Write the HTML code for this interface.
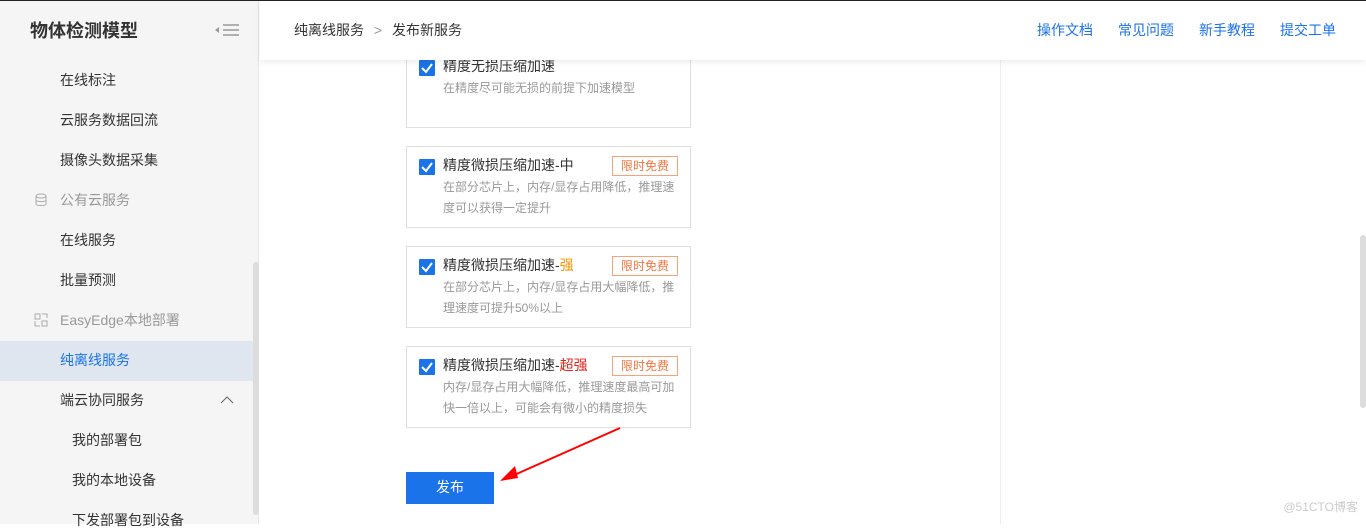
<!DOCTYPE html>
<html><head><meta charset="utf-8"><style>
*{margin:0;padding:0;box-sizing:border-box}
body{width:1366px;height:524px;overflow:hidden;background:#fff;font-family:"Liberation Sans","Noto Sans CJK SC",sans-serif;position:relative}
.side{position:absolute;left:0;top:0;width:259px;height:524px;background:#f5f5f5;border-right:1px solid #e6e6e6}
.title{position:absolute;left:30px;top:17px;font-size:18px;font-weight:bold;color:#333}
.it{position:absolute;left:60px;font-size:14px;color:#333}
.grp{position:absolute;left:60px;font-size:14px;color:#999}
.sb{position:absolute;left:253px;top:262px;width:6px;height:253px;background:#ddd;border-radius:3px}
.head{position:absolute;left:260px;top:0;width:1106px;height:60px;background:#fff;box-shadow:0 2px 6px rgba(0,0,0,.08);z-index:2}
.bc{position:absolute;left:34px;top:20px;font-size:14px;color:#333}
.links{position:absolute;right:30px;top:20px;font-size:14px;color:#1a73e8}
.links span{margin-left:25px}
.card{position:absolute;left:406px;width:285px;border:1px solid #e0e0e0;background:#fff}
.cb{position:absolute;left:12px;top:12px;width:16px;height:16px;background:#1a73e8;border-radius:1px}
.ct{position:absolute;left:36px;top:8px;font-size:14px;color:#333}
.cd{position:absolute;left:36px;top:30px;width:240px;font-size:12px;color:#999;line-height:21px}
.tag{position:absolute;left:205px;top:9px;width:66px;height:20px;border:1px solid #f7a37a;color:#f5753d;font-size:12px;text-align:center;line-height:18px}
.btn{position:absolute;left:406px;top:472px;width:88px;height:32px;background:#1a73e8;color:#fff;font-size:14px;text-align:center;line-height:31px}
</style></head><body>
<div class="side">
<div class="title">物体检测模型</div>
<svg style="position:absolute;left:215px;top:22px" width="24" height="16"><path d="M4 5 L0 8 L4 11Z" fill="#999"/><path d="M8 3H24M8 8H24M8 13H24" stroke="#999" stroke-width="1.5"/></svg>
<div class="it" style="top:70px">在线标注</div>
<div class="it" style="top:110px">云服务数据回流</div>
<div class="it" style="top:150px">摄像头数据采集</div>
<svg style="position:absolute;left:35px;top:193px" width="12" height="14"><ellipse cx="6" cy="3" rx="5" ry="2" fill="none" stroke="#aaa"/><path d="M1 3V11C1 13 11 13 11 11V3M1 7C1 9 11 9 11 7" fill="none" stroke="#aaa"/></svg>
<div class="grp" style="top:190px">公有云服务</div>
<div class="it" style="top:230px">在线服务</div>
<div class="it" style="top:270px">批量预测</div>
<svg style="position:absolute;left:34px;top:313px" width="14" height="14"><path d="M1 1h5v5h-5zM8 1h5v4M1 8v5h5M8 8h5v5h-5z" fill="none" stroke="#aaa"/></svg>
<div class="grp" style="top:310px">EasyEdge本地部署</div>
<div style="position:absolute;left:0;top:341px;width:253px;height:40px;background:#dfe6f0"></div>
<div class="it" style="top:350px;color:#1a73e8">纯离线服务</div>
<div class="it" style="top:390px">端云协同服务</div>
<svg style="position:absolute;left:220px;top:396px" width="14" height="8"><path d="M1 7L7 1L13 7" fill="none" stroke="#666"/></svg>
<div class="it" style="top:430px;left:72px">我的部署包</div>
<div class="it" style="top:470px;left:72px">我的本地设备</div>
<div class="it" style="top:510px;left:72px">下发部署包到设备</div>
<div class="sb"></div>
</div>
<div class="head"><div class="bc">纯离线服务 <span style="color:#999;margin:0 6px">&gt;</span> 发布新服务</div>
<div class="links"><span>操作文档</span><span>常见问题</span><span>新手教程</span><span>提交工单</span></div></div>
<div style="position:absolute;left:0;top:0;width:1366px;height:1px;background:#222;z-index:3"></div>
<div style="position:absolute;left:1000px;top:60px;width:1px;height:464px;background:#eee"></div>
<div style="position:absolute;left:1360px;top:235px;width:6px;height:173px;background:#ddd;border-radius:3px"></div>

<div class="card" style="top:47px;height:81px"><div class="cb"><svg width="16" height="16"><path d="M3 8L7 12L13 4" fill="none" stroke="#fff" stroke-width="2"/></svg></div><div class="ct">精度无损压缩加速</div><div class="cd">在精度尽可能无损的前提下加速模型</div></div>
<div class="card" style="top:146px;height:82px"><div class="cb"><svg width="16" height="16"><path d="M3 8L7 12L13 4" fill="none" stroke="#fff" stroke-width="2"/></svg></div><div class="ct">精度微损压缩加速-中</div><div class="tag">限时免费</div><div class="cd">在部分芯片上，内存/显存占用降低，推理速度可以获得一定提升</div></div>
<div class="card" style="top:246px;height:82px"><div class="cb"><svg width="16" height="16"><path d="M3 8L7 12L13 4" fill="none" stroke="#fff" stroke-width="2"/></svg></div><div class="ct">精度微损压缩加速-<span style="color:#f59300">强</span></div><div class="tag">限时免费</div><div class="cd">在部分芯片上，内存/显存占用大幅降低，推理速度可提升50%以上</div></div>
<div class="card" style="top:346px;height:82px"><div class="cb"><svg width="16" height="16"><path d="M3 8L7 12L13 4" fill="none" stroke="#fff" stroke-width="2"/></svg></div><div class="ct">精度微损压缩加速-<span style="color:#e8221a">超强</span></div><div class="tag">限时免费</div><div class="cd">内存/显存占用大幅降低，推理速度最高可加快一倍以上，可能会有微小的精度损失</div></div>

<div class="btn">发布</div>
<svg style="position:absolute;left:0;top:0" width="1366" height="524"><path d="M620 428L512 476" stroke="#f00" stroke-width="2"/><path d="M500 481L515 466L518 478Z" fill="#f00"/></svg>
<div style="position:absolute;right:8px;top:498px;font-size:12px;color:#ccc">@51CTO博客</div>
</body></html>
